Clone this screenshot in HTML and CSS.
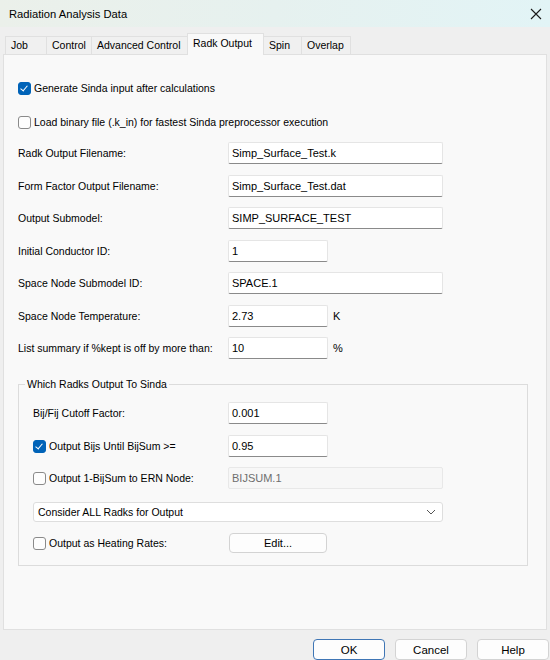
FILE: index.html
```html
<!DOCTYPE html>
<html>
<head lang="en">
    <meta charset="UTF-8">
    <title>Radiation Analysis Data</title>
    <link rel="stylesheet" href="styles.css">
</head>
<body>
<div class="titlebar">
    <span class="caption">Radiation Analysis Data</span>
    <svg class="close" width="12" height="12" viewBox="0 0 12 12">
        <path d="M1 1 L11 11 M11 1 L1 11" stroke="#1a1a1a" stroke-width="1.1" fill="none"/>
    </svg>
</div>

<div class="tabs">
    <span class="tab">Job</span>
    <span class="tab">Control</span>
    <span class="tab">Advanced Control</span>
    <span class="tab active">Radk Output</span>
    <span class="tab">Spin</span>
    <span class="tab">Overlap</span>
</div>

<div class="panel">
    <label class="check first"><span class="box on"></span>Generate Sinda input after calculations</label>
    <label class="check second"><span class="box"></span>Load binary file (.k_in) for fastest Sinda preprocessor execution</label>

    <div class="fields">
        <div class="row"><span>Radk Output Filename:</span><span class="edit long">Simp_Surface_Test.k</span></div>
        <div class="row"><span>Form Factor Output Filename:</span><span class="edit long">Simp_Surface_Test.dat</span></div>
        <div class="row"><span>Output Submodel:</span><span class="edit long">SIMP_SURFACE_TEST</span></div>
        <div class="row"><span>Initial Conductor ID:</span><span class="edit short">1</span></div>
        <div class="row"><span>Space Node Submodel ID:</span><span class="edit long">SPACE.1</span></div>
        <div class="row"><span>Space Node Temperature:</span><span class="edit short">2.73</span><span class="unit">K</span></div>
        <div class="row"><span>List summary if %kept is off by more than:</span><span class="edit short">10</span><span class="unit">%</span></div>
    </div>

    <fieldset class="group">
        <legend>Which Radks Output To Sinda</legend>
        <div class="row"><span>Bij/Fij Cutoff Factor:</span><span class="edit short">0.001</span></div>
        <div class="row r2"><label class="check"><span class="box on"></span>Output Bijs Until BijSum &gt;=</label><span class="edit short">0.95</span></div>
        <div class="row r3"><label class="check"><span class="box"></span>Output 1-BijSum to ERN Node:</label><span class="edit long disabled">BIJSUM.1</span></div>
        <div class="combo">
            <span>Consider ALL Radks for Output</span>
            <svg width="10" height="6" viewBox="0 0 10 6">
                <path d="M1 1 L5 5 L9 1" stroke="#555" stroke-width="1" fill="none"/>
            </svg>
        </div>
        <div class="row r5"><label class="check"><span class="box"></span>Output as Heating Rates:</label><span class="btn edit-btn">Edit...</span></div>
    </fieldset>
</div>

<div class="buttons">
    <span class="btn default">OK</span>
    <span class="btn">Cancel</span>
    <span class="btn">Help</span>
</div>
</body>
</html>
```

FILE: styles.css
```css
html, body {
    padding: 0;
    margin: 0;
}

body {
    width: 550px;
    height: 660px;
    overflow: hidden;
    background: #efefef;
    font-family: 'Liberation Sans', Arial, sans-serif;
    font-size: 10.5px;
    color: #000;
}

.titlebar {
    height: 27px;
    display: flex;
    align-items: center;
    justify-content: space-between;
    padding: 0 8px 0 9px;
    background: linear-gradient(to right, #ebf0ea, #e6f1ef 50%, #e2f4f6);
}

.titlebar .caption {
    font-size: 11.2px;
}

.tabs {
    display: flex;
    align-items: flex-end;
    height: 18px;
    margin-top: 9px;
    padding-left: 5px;
    position: relative;
    z-index: 1;
}

.tab {
    box-sizing: border-box;
    height: 18px;
    line-height: 17px;
    padding: 0 5px;
    min-width: 42px;
    border: 1px solid #e0e0e0;
    border-bottom: none;
    margin-right: -1px;
    background: #f0f0f0;
}

.tab:nth-child(2) {
    min-width: 46px;
}

.tab:nth-child(3) {
    min-width: 97px;
}

.tab.active {
    height: 22px;
    line-height: 19px;
    min-width: 77px;
    margin-bottom: -1px;
    background: #f9f9f9;
    position: relative;
    z-index: 2;
}

.tab:nth-child(5) {
    min-width: 39px;
}

.tab:nth-child(6) {
    min-width: 50px;
}

.panel {
    box-sizing: border-box;
    height: 576px;
    margin: 0 3px;
    padding: 0 14px;
    border: 1px solid #e0e0e0;
    background: #f9f9f9;
}

.check {
    display: flex;
    align-items: center;
    height: 20px;
}

.panel > .first {
    margin-top: 23px;
}

.panel > .second {
    margin-top: 14px;
}

.box {
    box-sizing: border-box;
    width: 13px;
    height: 13px;
    margin-right: 3px;
    border: 1px solid #8a8a8a;
    border-radius: 3px;
    background: #fdfdfd;
    position: relative;
}

.box.on {
    border-color: #0063b8;
    background: #0063b8;
}

.box.on::after {
    content: '';
    position: absolute;
    left: 3px;
    top: 1px;
    width: 3px;
    height: 6px;
    border: solid #fff;
    border-width: 0 1px 1px 0;
    transform: rotate(40deg);
}

.fields {
    display: flex;
    flex-direction: column;
    gap: 10.5px;
    margin-top: 10px;
}

.row {
    display: grid;
    grid-template-columns: 210px auto auto;
    justify-content: start;
    align-items: center;
    height: 22px;
}

.edit {
    box-sizing: border-box;
    height: 22px;
    line-height: 20px;
    padding: 0 3px;
    background: #fff;
    border: 1px solid #e5e5e5;
    border-bottom-color: #8a8a8a;
    border-radius: 2px;
    font-size: 11px;
}

.edit.long {
    width: 215px;
}

.edit.short {
    width: 100px;
}

.edit.disabled {
    background: #f7f7f7;
    border-color: #e8e8e8;
    color: #6e6e6e;
}

.unit {
    margin-left: 5px;
    font-size: 11px;
}

.group {
    margin: 17px 4px 0 0;
    padding: 10px 14px 12px 14px;
    border: 1px solid #dcdcdc;
}

.group legend {
    padding: 0 2px;
    margin-left: -8px;
    line-height: 16px;
}

.group .row {
    grid-template-columns: 195px auto;
}

.group .r2 {
    margin-top: 11px;
}

.group .r3 {
    margin-top: 10px;
}

.combo {
    box-sizing: border-box;
    display: flex;
    align-items: center;
    justify-content: space-between;
    width: 410px;
    height: 20px;
    margin-top: 13px;
    padding: 0 6px 0 4px;
    background: #fff;
    border: 1px solid #dedede;
    border-radius: 3px;
}

.group .r5 {
    margin-top: 11px;
    height: 20px;
}

.btn {
    box-sizing: border-box;
    display: inline-flex;
    align-items: center;
    justify-content: center;
    width: 72px;
    height: 21px;
    background: #fdfdfd;
    border: 1px solid #d3d3d3;
    border-radius: 4px;
    font-size: 11.5px;
}

.edit-btn {
    width: 98px;
    height: 20px;
    margin-left: 1px;
    font-size: 11px;
}

.buttons {
    display: flex;
    justify-content: flex-end;
    gap: 10px;
    margin-top: 9px;
    padding-right: 1px;
}

.btn.default {
    border-color: #3f76b5;
}
```
